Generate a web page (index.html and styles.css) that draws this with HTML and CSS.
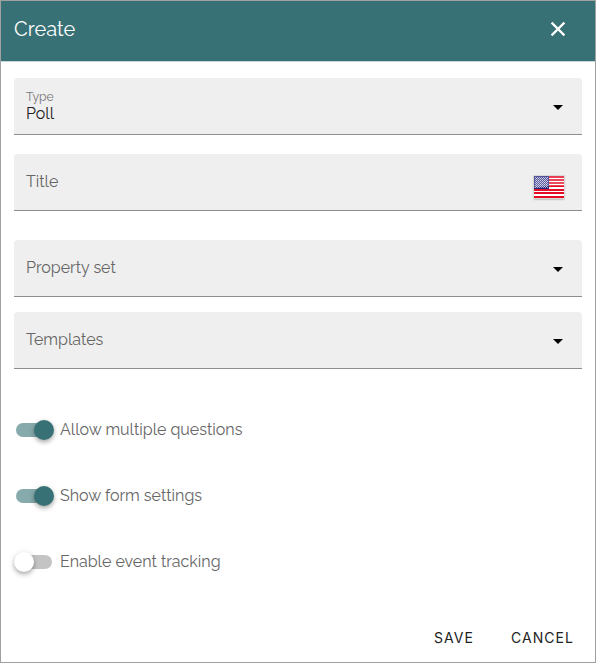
FILE: index.html
```html
<!DOCTYPE html>
<html lang="en">
<head>
<meta charset="utf-8">
<title>Create</title>
<link rel="stylesheet" href="styles.css">
</head>
<body>
<div class="dialog">
  <header class="toolbar">
    <h1 class="toolbar-title">Create</h1>
    <svg class="close" viewBox="0 0 16 16"><path d="M1.6 1.6 14.4 14.4M14.4 1.6 1.6 14.4"/></svg>
  </header>
  <main class="form">
    <div class="field field-type">
      <div class="field-text"><span class="field-label">Type</span><span class="field-value">Poll</span></div>
      <svg class="caret" viewBox="0 0 10 5"><path d="M0 0h10L5 5z"/></svg>
    </div>
    <div class="field field-title">
      <span class="placeholder">Title</span>
      <svg class="flag" viewBox="0 0 30 22">
        <defs>
          <pattern id="stars" width="2" height="2" patternUnits="userSpaceOnUse">
            <rect width="2" height="2" fill="#25267f"/>
            <rect width="1" height="1" fill="#c9c9e4"/><rect x="1" y="1" width="1" height="1" fill="#a5a5d0"/>
          </pattern>
          <linearGradient id="gloss" x1="0" y1="0" x2="0" y2="1"><stop offset="0" stop-color="#fff" stop-opacity=".2"/><stop offset="1" stop-color="#fff" stop-opacity=".3"/></linearGradient>
        </defs>
        <rect width="30" height="22" fill="#fff"/>
        <path d="M0 1h30M0 4h30M0 7h30M0 10h30M0 14h30M0 17h30M0 21h30" stroke="#e20c27" stroke-width="2"/>
        <rect width="15" height="13" fill="#25267f"/>
        <rect x="1" y="1" width="13" height="11" fill="url(#stars)"/>
        <path d="M0 0h30v10Q18 9 0 12z" fill="url(#gloss)"/>
      </svg>
    </div>
    <div class="field field-property">
      <span class="placeholder">Property set</span>
      <svg class="caret" viewBox="0 0 10 5"><path d="M0 0h10L5 5z"/></svg>
    </div>
    <div class="field">
      <span class="placeholder">Templates</span>
      <svg class="caret" viewBox="0 0 10 5"><path d="M0 0h10L5 5z"/></svg>
    </div>
    <div class="switches">
      <div class="switch on"><span class="track"><span class="thumb"></span></span><span class="switch-label">Allow multiple questions</span></div>
      <div class="switch on"><span class="track"><span class="thumb"></span></span><span class="switch-label">Show form settings</span></div>
      <div class="switch"><span class="track"><span class="thumb"></span></span><span class="switch-label">Enable event tracking</span></div>
    </div>
  </main>
  <footer class="actions">
    <span class="action">SAVE</span>
    <span class="action">CANCEL</span>
  </footer>
</div>
</body>
</html>
```
FILE: styles.css
```css
* { box-sizing: border-box; }
body {
  margin: 0;
  font-family: Raleway, Lato, sans-serif;
  font-size: 16px;
  color: #666;
}
.dialog {
  display: flex;
  flex-direction: column;
  height: 663px;
  border: 1px solid #a0a0a0;
  background: #fff;
}
.toolbar {
  display: flex;
  align-items: center;
  justify-content: space-between;
  height: 61px;
  padding: 0 29px 4px 13px;
  background: #377175;
  border-bottom: 1px solid #cbd6d7;
  color: #fff;
}
.toolbar-title {
  margin: 0;
  font-size: 20px;
  font-weight: 400;
  line-height: 24px;
}
.close { width: 16px; height: 16px; fill: none; stroke: #fff; stroke-width: 2.2; }
.form { flex: 1; padding: 16px 13px 0; }
.field {
  display: flex;
  justify-content: space-between;
  height: 57px;
  padding: 0 17px 0 12px;
  background: #efefef;
  border-bottom: 1px solid #8e8e8e;
  border-radius: 4px 4px 0 0;
}
.field-type { margin-bottom: 19px; }
.field-title { margin-bottom: 29px; }
.field-property { margin-bottom: 15px; }
.field-text { display: flex; flex-direction: column; padding-top: 11px; }
.field-label { font-size: 12.2px; line-height: 16px; color: #777; }
.field-value { line-height: 18px; color: #222; }
.placeholder { line-height: 20px; padding-top: 18px; }
.caret { width: 10px; height: 5px; margin-top: 27px; margin-right: 2px; fill: #000; }
.flag { width: 30px; height: 22px; margin-top: 22px; margin-right: 1px; box-shadow: 0 0 0 1px #d8d8d8, 0 1px 2px #777; }
.switches { display: flex; flex-direction: column; gap: 46px; padding-top: 51px; }
.switch { display: flex; align-items: center; height: 20px; padding-left: 2px; }
.track {
  position: relative;
  width: 36px;
  height: 14px;
  border-radius: 7px;
  background: #c4c4c4;
}
.thumb {
  position: absolute;
  top: -3px;
  left: -2px;
  width: 20px;
  height: 20px;
  border-radius: 50%;
  background: #fff;
  box-shadow: 0 2px 4px -1px rgba(0,0,0,.2), 0 3px 5px rgba(0,0,0,.14), 0 1px 7px rgba(0,0,0,.12);
}
.on .track { background: #87aaac; }
.on .thumb { left: 18px; background: #377175; }
.switch-label { margin-left: 8px; line-height: 20px; white-space: nowrap; }
.actions {
  display: flex;
  justify-content: flex-end;
  gap: 37px;
  padding: 0 21px 15px 0;
}
.action { font: 400 14px/18px Inter, sans-serif; letter-spacing: 1.05px; color: #222; }
```
